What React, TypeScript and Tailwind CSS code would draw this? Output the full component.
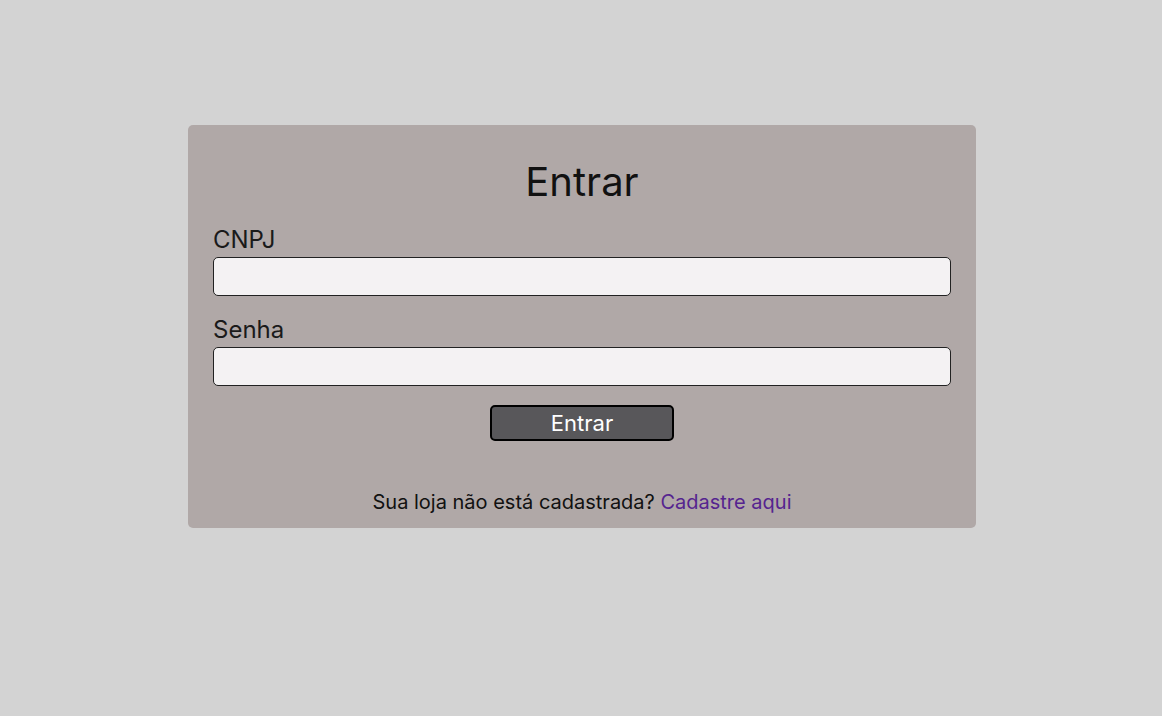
import React from 'react';

export default function App() {
    return (
        <div className="min-h-screen w-full bg-[#d3d3d3] pl-[2px] pt-[125px] font-['Inter',sans-serif]">
            <div className="mx-auto flex w-[788px] flex-col rounded-[5px] bg-[#b0a8a7] px-[25px] pb-[12px] pt-[27px]">

                {/* Title */}
                <h1 className="text-center text-[40px] leading-[60px] text-[#111]">Entrar</h1>

                {/* CNPJ */}
                <label className="mt-[13px] text-[24px] leading-[30px] text-[#1a1a1a]">CNPJ</label>
                <input
                    type="text"
                    className="mt-[2px] h-[39px] w-full rounded-[5px] border border-[#222] bg-[#f4f2f3] px-2 outline-none"
                />

                {/* Senha */}
                <label className="mt-[19px] text-[24px] leading-[30px] text-[#1a1a1a]">Senha</label>
                <input
                    type="password"
                    className="mt-[2px] h-[39px] w-full rounded-[5px] border border-[#222] bg-[#f4f2f3] px-2 outline-none"
                />

                {/* Submit */}
                <div className="mt-[19px] flex justify-center">
                    <button className="h-[36px] w-[184px] rounded-[5px] border-2 border-black bg-[#58575a] text-[22px] leading-[30px] text-white">
                        Entrar
                    </button>
                </div>

                {/* Register */}
                <p className="mt-[47px] text-center text-[20px] leading-[28px] text-[#111]">
                    Sua loja não está cadastrada? <a className="text-[#55248f]" href="#">Cadastre aqui</a>
                </p>

            </div>
        </div>
    );
}
